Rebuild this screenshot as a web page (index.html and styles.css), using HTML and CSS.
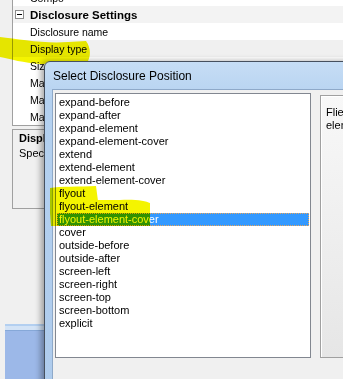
FILE: index.html
```html
<!DOCTYPE html>
<html lang="en">

<head>
    <meta charset="UTF-8">
    <title>Select Disclosure Position</title>
    <link rel="stylesheet" href="styles.css">
</head>

<body>

    <div class="panel">
        <svg class="marker" width="120" height="70" viewBox="0 0 120 70">
            <path d="M0 37 C 18 39, 45 44, 68 42 L 86 41 C 91 48, 91 56, 87 63 L 40 64 C 24 63, 10 59, 0 57 Z" />
        </svg>

        <div class="grid">
            <div class="row">Compo</div>
            <div class="row cat"><span class="minus"></span>Disclosure Settings</div>
            <div class="row">Disclosure name</div>
            <div class="row alt">Display type</div>
            <div class="row">Size</div>
            <div class="row">Max width</div>
            <div class="row">Max height</div>
            <div class="row">Margin</div>
        </div>

        <div class="help">
            <b>Display type</b>
            <p>Specifies how the disclosure is displayed</p>
        </div>

        <div class="spacer"></div>
        <div class="taskbar"></div>
    </div>

    <div class="dialog">
        <div class="title">Select Disclosure Position</div>
        <div class="client">
            <ul class="list">
                <li>expand-before</li>
                <li>expand-after</li>
                <li>expand-element</li>
                <li>expand-element-cover</li>
                <li>extend</li>
                <li>extend-element</li>
                <li>extend-element-cover</li>
                <li>flyout</li>
                <li>flyout-element</li>
                <li class="selected">flyout-element-cover</li>
                <li>cover</li>
                <li>outside-before</li>
                <li>outside-after</li>
                <li>screen-left</li>
                <li>screen-right</li>
                <li>screen-top</li>
                <li>screen-bottom</li>
                <li>explicit</li>
            </ul>
            <div class="desc">
                Flies out from the element,<br>
                element stays in place.
            </div>
        </div>
    </div>

    <!-- highlighter marks over the list -->
    <svg class="marks" width="343" height="379" viewBox="0 0 343 379">
        <path d="M50 188 C 60 186, 80 187, 96 186 L 98 201 L 50 202 Z" />
        <path d="M50 200 L 120 200 C 135 199, 146 201, 150 203 L 150 213 L 50 213 Z" />
        <path d="M50 213 L 150 213 L 150 226 L 51 226 Z" />
    </svg>

</body>

</html>
```

FILE: styles.css
```css
* {
    box-sizing: border-box;
}

body,
html {
    margin: 0;
    padding: 0;
}

body {
    width: 343px;
    height: 379px;
    overflow: hidden;
    position: relative;
    background-color: #f0f0f0;
    color: #000;
    font-family: "Liberation Sans", Arial, sans-serif;
}

/* property grid behind the dialog */
.panel {
    position: relative;
    height: 379px;
    display: flex;
    flex-direction: column;
}

.marker {
    position: absolute;
    top: 0;
    left: 0;
    mix-blend-mode: multiply;
    fill: #f4f400;
}

.grid {
    margin-top: -11px;
    margin-left: 12px;
    border-left: 1px solid #a0a0a0;
    border-bottom: 1px solid #a0a0a0;
    background-color: #fff;
}

.row {
    height: 17px;
    display: flex;
    align-items: center;
    padding-left: 17px;
    font-size: 10.5px;
    white-space: nowrap;
}

.row.cat {
    padding-left: 2px;
    font-weight: bold;
    font-size: 11.5px;
    background-color: #f3f3f3;
}

.row.alt {
    background-color: #f0f0f0;
}

.minus {
    position: relative;
    width: 9px;
    height: 9px;
    margin-right: 6px;
    border: 1px solid #8a8a8a;
    background-color: #fff;
}

.minus::after {
    content: "";
    position: absolute;
    left: 1px;
    right: 1px;
    top: 3px;
    height: 1px;
    background-color: #000;
}

.help {
    margin: 3px 0 0 12px;
    height: 80px;
    border: 1px solid #a0a0a0;
    padding: 1px 6px;
    font-size: 11px;
    line-height: 15px;
    white-space: nowrap;
}

.help p {
    margin: 0;
}

.spacer {
    flex: 1;
}

.taskbar {
    height: 55px;
    margin-left: 5px;
    border-top: 2px solid #b3cff0;
    background: linear-gradient(#d3e3f6 0, #d3e3f6 4px, #86a8d8 4px, #86a8d8 5px, #9cb8e8 5px);
}

/* dialog window */
.dialog {
    position: absolute;
    left: 44px;
    top: 61px;
    width: 330px;
    height: 340px;
    display: flex;
    flex-direction: column;
    padding: 0 7px 7px 7px;
    border: 1px solid #46505e;
    border-radius: 6px 6px 0 0;
    background: linear-gradient(#c6ddf5, #b4d1f0 40px, #aecbec);
    box-shadow: -3px 0 6px rgba(0, 0, 0, 0.35);
}

.title {
    height: 27px;
    display: flex;
    align-items: center;
    padding-left: 1px;
    font-size: 12px;
    white-space: nowrap;
}

.client {
    flex: 1;
    display: flex;
    align-items: flex-start;
    gap: 9px;
    padding: 3px 0 0 2px;
    border: 1px solid #8ea9c9;
    background-color: #f0f0f0;
}

.list {
    flex: none;
    width: 256px;
    height: 265px;
    margin: 0;
    padding: 2px 1px;
    list-style: none;
    border: 1px solid #828790;
    background-color: #fff;
    font-size: 11px;
}

.list li {
    height: 13px;
    line-height: 13px;
    padding-left: 2px;
    white-space: nowrap;
}

.list li.selected {
    background-color: #3399ff;
    color: #fff;
    outline: 1px dotted #e9a55a;
    outline-offset: -1px;
}

.desc {
    flex: none;
    width: 120px;
    height: 263px;
    margin-top: 2px;
    padding: 10px 5px;
    border: 1px solid #a0a0a0;
    box-shadow: inset 1px 1px #fff;
    background: linear-gradient(#f8f8f8, #e6e6e6);
    font-size: 11px;
    line-height: 13px;
    white-space: nowrap;
}

/* highlighter over everything */
.marks {
    position: absolute;
    top: 0;
    left: 0;
    pointer-events: none;
    mix-blend-mode: multiply;
    fill: #f4f400;
}
```
